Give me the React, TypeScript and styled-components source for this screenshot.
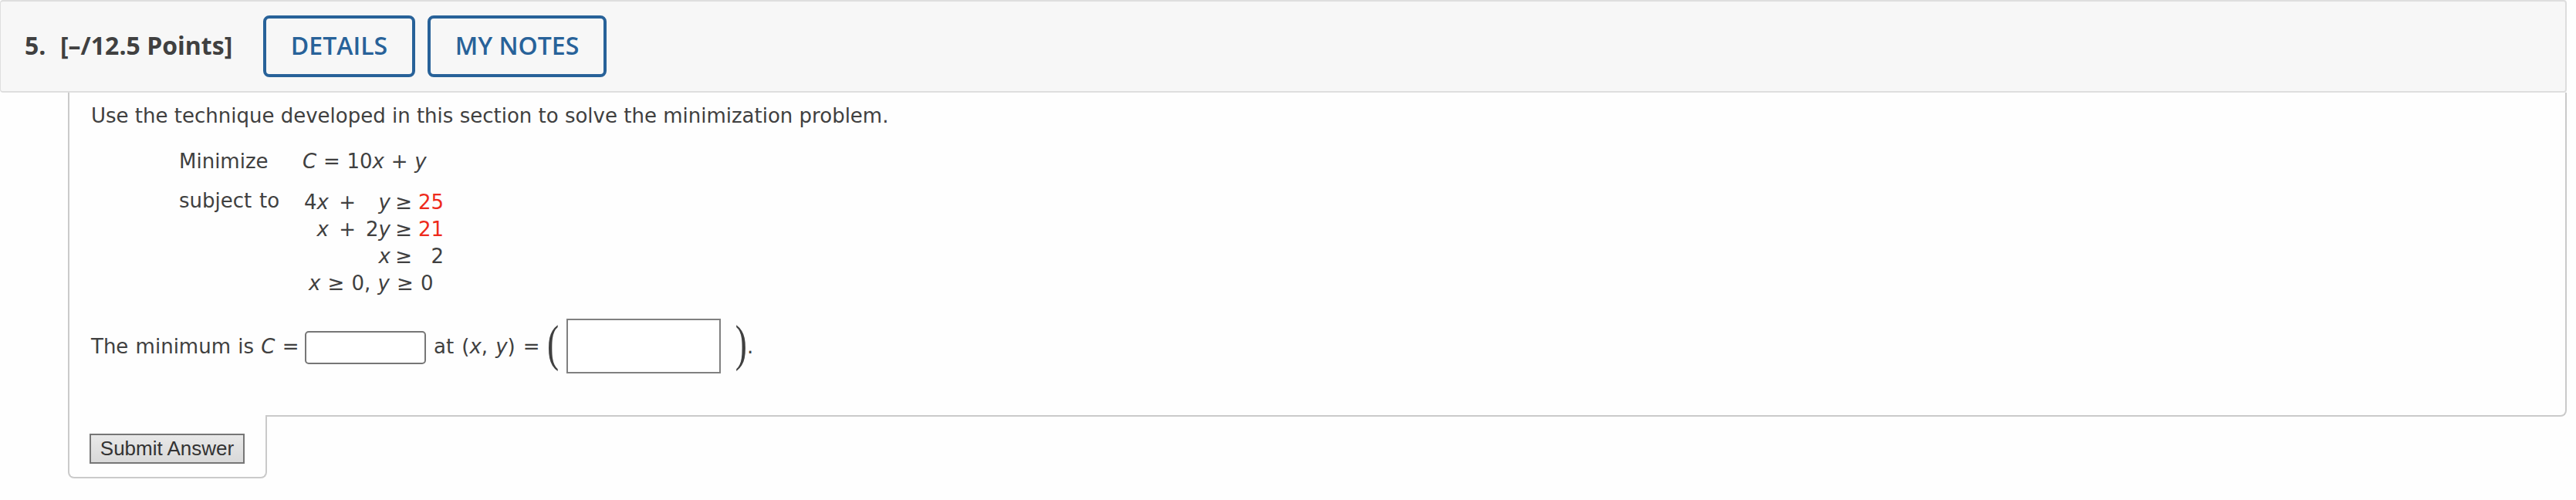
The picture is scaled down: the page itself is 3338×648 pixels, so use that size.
import React from 'react';
import styled, { createGlobalStyle } from 'styled-components';

const GlobalStyle = createGlobalStyle`
  * {
    box-sizing: border-box;
  }
  body {
    margin: 0;
    background: #fefefe;
    color: #404040;
    font-family: 'DejaVu Sans', Verdana, sans-serif;
    font-size: 26px;
    line-height: 35px;
  }
`;

const Page = styled.div`
  width: 3326px;
`;

const Header = styled.header`
  display: flex;
  align-items: center;
  height: 120px;
  padding-left: 31px;
  background: #f7f7f7;
  border: 2px solid #dedede;
  border-left-width: 1px;
  border-radius: 4px;
  font-family: 'Open Sans', sans-serif;
  font-size: 32px;
  font-weight: 700;
`;

const QuestionNumber = styled.span`
  width: 46px;
  padding-bottom: 4px;
`;

const Points = styled.span`
  width: 263px;
  padding-bottom: 4px;
  white-space: nowrap;
`;

const HeaderButton = styled.button<{ $width: number }>`
  width: ${({ $width }) => $width}px;
  height: 80px;
  margin-right: 16px;
  padding: 0 0 4px;
  background: #f7f7f7;
  border: 4px solid #286299;
  border-radius: 8px;
  color: #286299;
  font-family: inherit;
  font-size: 32px;
  font-weight: 600;
  white-space: nowrap;
`;

const Body = styled.div`
  margin-left: 88px;
`;

const Panel = styled.main`
  height: 420px;
  padding: 13px 0 0 28px;
  border: 2px solid #cacaca;
  border-top: 0;
  border-radius: 0 0 8px 0;
`;

const Prompt = styled.p`
  margin: 0;
`;

const Problem = styled.div`
  display: grid;
  grid-template-columns: 160px auto;
  justify-content: start;
  row-gap: 16px;
  margin: 24px 0 0 114px;
`;

const Term = styled.span`
  word-spacing: 1.5px;
`;

const Objective = styled.span`
  word-spacing: 0.5px;
`;

const System = styled.div`
  display: grid;
  grid-template-columns: 34px 35px 45px 28px 41px;
  grid-auto-rows: 35px;
  justify-items: end;
  padding-top: 2px;
`;

const Bounds = styled.span`
  grid-column: 1 / -1;
  justify-self: start;
  padding-left: 8px;
  word-spacing: 0.9px;
  white-space: nowrap;
`;

const Given = styled.span`
  color: #ee2a1c;
`;

const AnswerRow = styled.div`
  display: flex;
  align-items: center;
  height: 71px;
  margin-top: 28px;
  white-space: pre;
`;

const Label = styled.span<{ $width: number; $spacing: number }>`
  width: ${({ $width }) => $width}px;
  padding-top: 2px;
  word-spacing: ${({ $spacing }) => $spacing}px;
`;

const NumberInput = styled.input`
  width: 157px;
  height: 43px;
  margin-top: 3px;
  background: #fff;
  border: 2px solid #767676;
  border-radius: 5px;
`;

const PointInput = styled.input`
  width: 200px;
  height: 71px;
  background: #fff;
  border: 2px solid #808080;
`;

const Paren = styled.span<{ $width: number; $origin: string }>`
  width: ${({ $width }) => $width}px;
  padding-bottom: 7px;
  font-family: 'Liberation Serif', serif;
  font-size: 65px;
  line-height: 64px;
  text-align: ${({ $origin }) => $origin};
  transform: scaleX(0.7);
  transform-origin: ${({ $origin }) => $origin};
`;

const Period = styled.span`
  padding-top: 2px;
`;

const SubmitTab = styled.footer`
  position: relative;
  width: 258px;
  height: 82px;
  margin-top: -2px;
  padding: 24px 0 0 26px;
  background: #fefefe;
  border: 2px solid #cacaca;
  border-top: 0;
  border-radius: 0 0 8px 8px;
`;

const SubmitButton = styled.button`
  display: block;
  width: 201px;
  height: 39px;
  padding: 0 0 1px;
  background: linear-gradient(#e8e8e8, #d9d9d9);
  border: 2px solid #767676;
  color: #333;
  font-family: 'Liberation Sans', Arial, sans-serif;
  font-size: 26px;
  line-height: 34px;
  white-space: nowrap;
`;

interface SystemRow {
  first?: React.ReactNode;
  plus?: boolean;
  second: React.ReactNode;
  bound: React.ReactNode;
}

const rows: SystemRow[] = [
  { first: <>4<i>x</i></>, plus: true, second: <i>y</i>, bound: <Given>25</Given> },
  { first: <i>x</i>, plus: true, second: <>2<i>y</i></>, bound: <Given>21</Given> },
  { second: <i>x</i>, bound: '2' },
];

const App: React.FC = () => (
  <Page>
    <GlobalStyle />
    <Header>
      <QuestionNumber>5.</QuestionNumber>
      <Points>[–/12.5 Points]</Points>
      <HeaderButton $width={197}>DETAILS</HeaderButton>
      <HeaderButton $width={232}>MY NOTES</HeaderButton>
    </Header>
    <Body>
      <Panel>
        <Prompt>
          Use the technique developed in this section to solve the minimization
          problem.
        </Prompt>
        <Problem>
          <Term>Minimize</Term>
          <Objective>
            <i>C</i> = 10<i>x</i> + <i>y</i>
          </Objective>
          <Term>subject to</Term>
          <System>
            {rows.map((row, index) => (
              <React.Fragment key={index}>
                <span>{row.first}</span>
                <span>{row.plus && '+'}</span>
                <span>{row.second}</span>
                <span>≥</span>
                <span>{row.bound}</span>
              </React.Fragment>
            ))}
            <Bounds>
              <i>x</i> ≥ 0, <i>y</i> ≥ 0
            </Bounds>
          </System>
        </Problem>
        <AnswerRow>
          <Label $width={277} $spacing={1}>
            The minimum is <i>C</i> =
          </Label>
          <NumberInput />
          <Label $width={157} $spacing={1.8}>
            {' '}at (<i>x</i>, <i>y</i>) =
          </Label>
          <Paren $width={25} $origin="left">(</Paren>
          <PointInput />
          <Paren $width={34} $origin="right">)</Paren>
          <Period>.</Period>
        </AnswerRow>
      </Panel>
      <SubmitTab>
        <SubmitButton>Submit Answer</SubmitButton>
      </SubmitTab>
    </Body>
  </Page>
);

export default App;
